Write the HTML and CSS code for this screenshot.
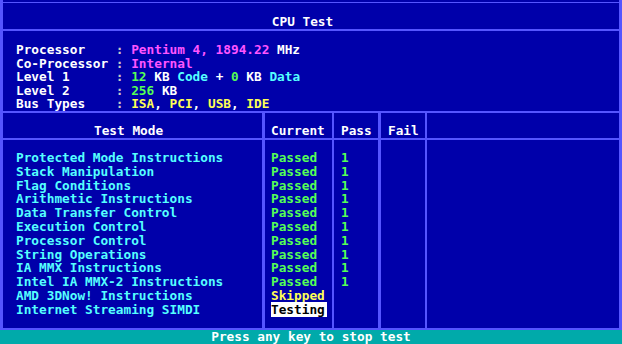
FILE: index.html
```html
<!DOCTYPE html>
<html lang="en">

<head>
    <meta charset="UTF-8">
    <title>CPU Test</title>

    <link rel="stylesheet" href="styles.css">
</head>

<body>
<div class="screen">
    <div class="frame">
        <div class="title">CPU Test</div>

        <div class="info">
            <div class="line">Processor    <span class="sep">:</span> <span class="mag">Pentium 4, 1894.22</span> MHz</div>
            <div class="line">Co-Processor <span class="sep">:</span> <span class="mag">Internal</span></div>
            <div class="line">Level 1      <span class="sep">:</span> <span class="grn">12</span> KB <span class="cyn">Code</span> + <span class="grn">0</span> KB <span class="cyn">Data</span></div>
            <div class="line">Level 2      <span class="sep">:</span> <span class="grn">256</span> KB</div>
            <div class="line">Bus Types    <span class="sep">:</span> <span class="yel">ISA</span>, <span class="yel">PCI</span>, <span class="yel">USB</span>, <span class="yel">IDE</span></div>
        </div>

        <div class="table">
            <div class="head c1 mode-head">Test Mode</div>
            <div class="head c2">Current</div>
            <div class="head c3">Pass</div>
            <div class="head c4">Fail</div>
            <div class="head c5"></div>

            <div class="cell c1 cyn" id="modes"></div>
            <div class="cell c2" id="current"></div>
            <div class="cell c3 grn" id="passes"></div>
            <div class="cell c4"></div>
            <div class="cell c5"></div>
        </div>
    </div>

    <div class="status">Press any key to stop test</div>
</div>

<script>
    // list of tests and their state
    const tests = [
        ['Protected Mode Instructions', 'Passed', 1],
        ['Stack Manipulation', 'Passed', 1],
        ['Flag Conditions', 'Passed', 1],
        ['Arithmetic Instructions', 'Passed', 1],
        ['Data Transfer Control', 'Passed', 1],
        ['Execution Control', 'Passed', 1],
        ['Processor Control', 'Passed', 1],
        ['String Operations', 'Passed', 1],
        ['IA MMX Instructions', 'Passed', 1],
        ['Intel IA MMX-2 Instructions', 'Passed', 1],
        ['AMD 3DNow! Instructions', 'Skipped', null],
        ['Internet Streaming SIMDI', 'Testing', null]
    ];

    const modes = document.getElementById('modes');
    const current = document.getElementById('current');
    const passes = document.getElementById('passes');

    tests.forEach(test => {
        const name = document.createElement('div');
        name.textContent = test[0];
        modes.appendChild(name);

        const state = document.createElement('div');
        const label = document.createElement('span');
        label.textContent = test[1];
        label.classList.add(test[1].toLowerCase());
        state.appendChild(label);
        current.appendChild(state);

        const count = document.createElement('div');
        count.textContent = test[2] === null ? '\u00a0' : test[2];
        passes.appendChild(count);
    });
</script>
</body>

</html>
```

FILE: styles.css
```css
body {
    margin: 0;
    background-color: #0000aa;
    font-family: "DejaVu Sans Mono", monospace;
    font-weight: bold;
    font-size: 12.75px;
    color: #ffffff;
}

.screen {
    width: 622px;
    height: 344px;
    overflow: hidden;
}

.frame {
    height: 330px;
    box-sizing: border-box;
    padding-top: 2px;
    border-left: 3px solid #5555ff;
    border-right: 3px solid #5555ff;
    border-bottom: 2px solid #5555ff;
    display: flex;
    flex-direction: column;
}

.title {
    border-top: 1px solid #5555ff;
    border-bottom: 2px solid #5555ff;
    padding-top: 12px;
    height: 14px;
    line-height: 14px;
    text-align: center;
    padding-right: 17px;
}

.info {
    height: 68px;
    padding-top: 12px;
    padding-left: 13px;
    border-bottom: 2px solid #5555ff;
    line-height: 13.6px;
    overflow: hidden;
}

.line {
    white-space: pre;
}

.table {
    flex: 1;
    display: grid;
    grid-template-columns: 262px 69px 47px 46px 1fr;
    grid-template-rows: 27px 1fr;
}

.head {
    border-bottom: 2px solid #5555ff;
    padding-top: 11px;
    line-height: 13.8px;
    box-sizing: border-box;
}

.cell {
    padding-top: 11px;
    line-height: 13.8px;
}

.c1 {
    border-right: 3px solid #5555ff;
    padding-left: 13px;
}

.mode-head {
    padding-left: 91px;
}

.c2 {
    border-right: 2px solid #5555ff;
    padding-left: 6px;
}

.c3 {
    border-right: 3px solid #5555ff;
    padding-left: 7px;
}

.c4 {
    border-right: 2px solid #5555ff;
    padding-left: 7px;
}

.sep {
    color: #c8c8c8;
}

.mag {
    color: #ff55ff;
}

.grn {
    color: #55ff55;
}

.cyn {
    color: #55ffff;
}

.yel {
    color: #ffff55;
}

.passed {
    color: #55ff55;
}

.skipped {
    color: #ffff55;
}

.testing {
    color: #000000;
    background-color: #ffffff;
    padding-right: 2px;
}

.status {
    height: 14px;
    line-height: 14px;
    background-color: #00aaaa;
    text-align: center;
}
```
